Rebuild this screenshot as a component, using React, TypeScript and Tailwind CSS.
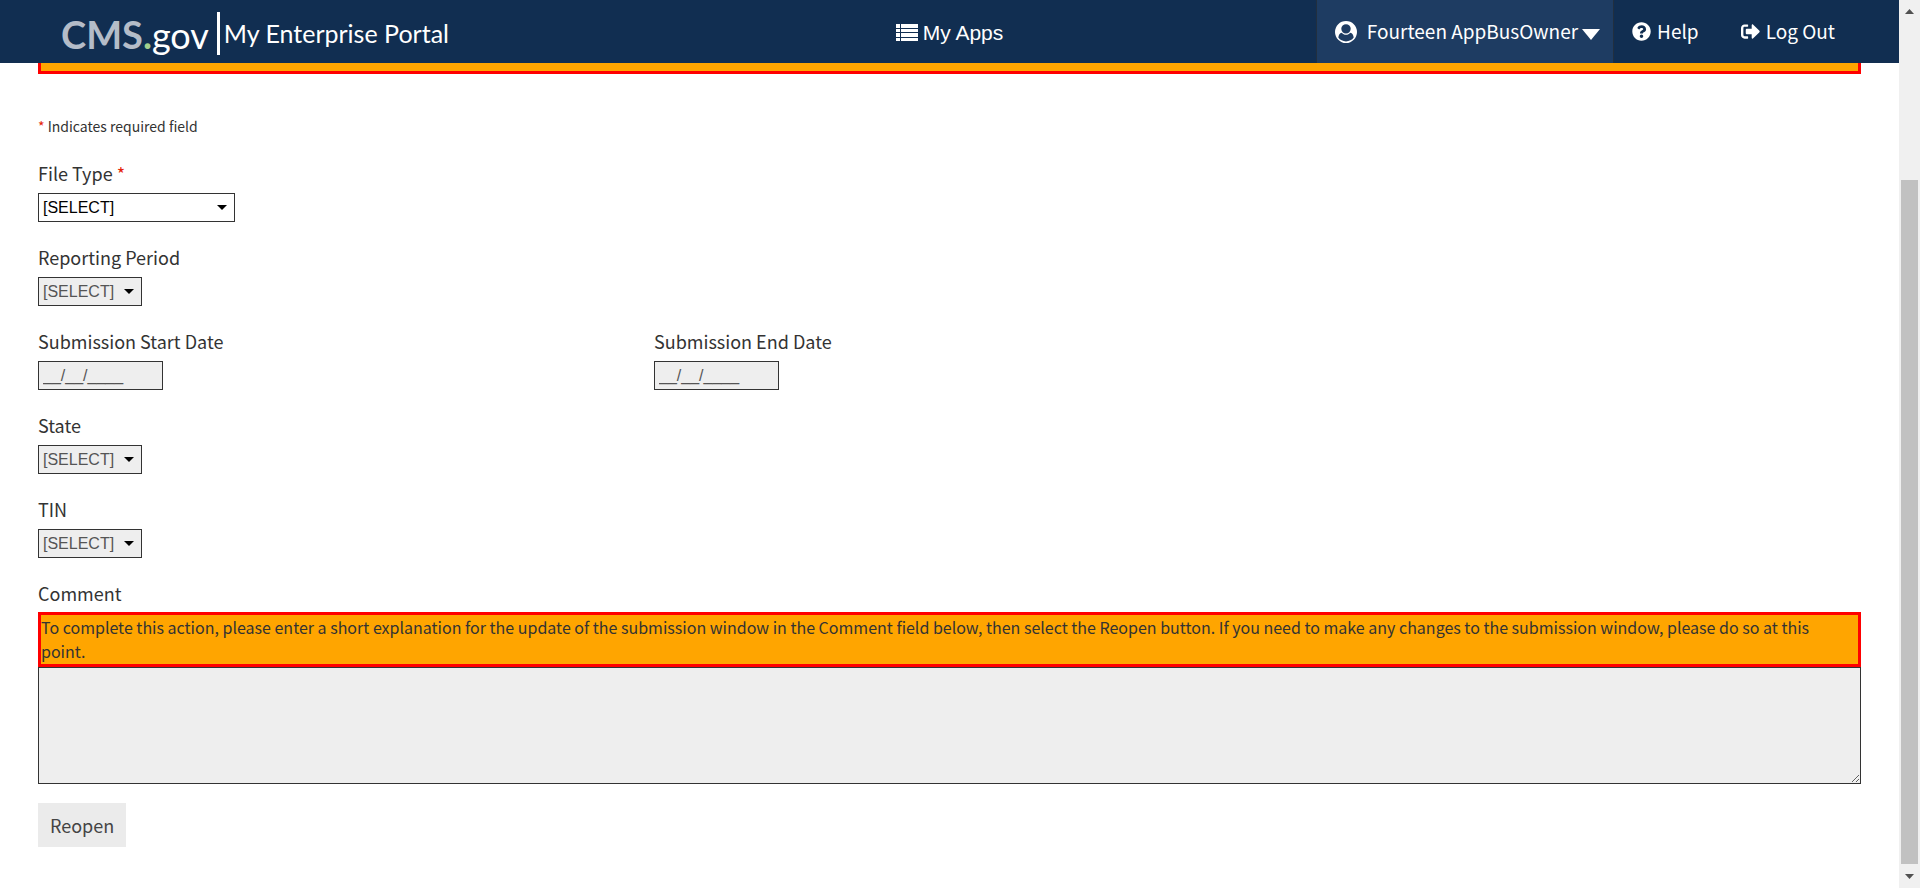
import React from "react";
import { FaQuestionCircle, FaSignOutAlt } from "react-icons/fa";

const body = "font-['Noto_Sans_CJK_SC','Noto_Sans',sans-serif]";
const arial = "font-['Liberation_Sans',Arial,sans-serif]";

type SelectProps = {
  id: string;
  label: string;
  required?: boolean;
  disabled?: boolean;
  width: string;
};

function Select({ id, label, required, disabled, width }: SelectProps) {
  return (
    <div className="flex flex-col items-start">
      <label htmlFor={id} className="mb-2 text-[18px] leading-6">
        {label} {required && <span className="text-[#e52207]">*</span>}
      </label>
      <div className={`relative ${width}`}>
        <select
          id={id}
          disabled={disabled}
          className={`block h-[29px] w-full appearance-none border border-[#333] pl-1 text-[16px] opacity-100 ${arial} ${disabled ? "bg-[#eee] text-[#555]" : "bg-white text-black"}`}
        >
          <option>[SELECT]</option>
        </select>
        <svg viewBox="0 0 10 5" className="pointer-events-none absolute right-2 top-3 h-[5px] w-[10px]">
          <path d="M0 0h10L5 5z" fill="#000" />
        </svg>
      </div>
    </div>
  );
}

function DateField({ id, label }: { id: string; label: string }) {
  return (
    <div className="flex flex-col items-start">
      <label htmlFor={id} className="mb-2 text-[18px] leading-6">{label}</label>
      <input
        id={id}
        disabled
        defaultValue="__/__/____"
        className={`block h-[29px] w-[125px] border border-[#333] bg-[#eee] pl-1 text-[16px] text-[#555] ${arial}`}
      />
    </div>
  );
}

function UserIcon() {
  return (
    <svg viewBox="0 0 1792 1792" className="size-[22px]" fill="currentColor">
      <path d="M1523 1339q-22-155-87.5-257.5t-184.5-118.5q-67 74-159.5 115.5t-195.5 41.5-195.5-41.5-159.5-115.5q-119 16-184.5 118.5t-87.5 257.5q106 150 271 237.5t356 87.5 356-87.5 271-237.5zm-243-699q0-159-112.5-271.5t-271.5-112.5-271.5 112.5-112.5 271.5 112.5 271.5 271.5 112.5 271.5-112.5 112.5-271.5zm512 256q0 182-71 347.5t-190.5 286-285.5 191.5-349 71q-182 0-348-71t-286-191-191-286-71-348 71-348 191-286 286-191 348-71 348 71 286 191 191 286 71 348z" />
    </svg>
  );
}

function Header() {
  return (
    <header className="fixed inset-x-0 top-0 z-10 mr-[21px] grid h-[63px] grid-cols-[1fr_auto_1fr] bg-[#112e51] text-[19px] text-white">
      <a href="#" className="flex items-center pl-[61px] font-['Lato',sans-serif]">
        <span className="flex items-baseline pt-1 text-[38px] leading-none">
          <span className="font-bold text-[#b4bcc8]">CMS</span>
          <span className="font-bold text-[#a3d08e]">.</span>
          <span className="text-[36px]">gov</span>
        </span>
        <span className="ml-2 mr-1 mt-1 h-[43px] w-[3px] bg-white" />
        <span className="pt-1 text-[25px] leading-none">My Enterprise Portal</span>
      </a>
      <a href="#" className={`flex items-center gap-[5px] pt-0.5 text-[21px] ${arial}`}>
        <svg viewBox="0 0 22 18" className="h-[18px] w-[22px]" fill="currentColor">
          <path d="M0 0h4v4H0zM5 0h17v4H5zM0 5h4v3H0zM5 5h17v3H5zM0 9h4v4H0zM5 9h17v4H5zM0 14h4v3H0zM5 14h17v3H5z" />
        </svg>
        My Apps
      </a>
      <nav className="flex items-stretch justify-end pr-16">
        <button className="flex items-center border-x border-[#212f3f] bg-[#1e3c62] pl-[18px] pr-[13px]">
          <UserIcon />
          <span className="ml-2.5 mr-1">Fourteen AppBusOwner</span>
          <svg viewBox="0 0 18 11" className="mt-1.5 h-[11px] w-[18px]">
            <path d="M0 0h18L9 11z" fill="currentColor" />
          </svg>
        </button>
        <a href="#" className="ml-[18px] flex items-center gap-1.5">
          <FaQuestionCircle className="size-[19px]" />
          Help
        </a>
        <a href="#" className="ml-[42px] flex items-center gap-1.5">
          <FaSignOutAlt className="size-[19px]" />
          Log Out
        </a>
      </nav>
    </header>
  );
}

function Scrollbar() {
  return (
    <div aria-hidden="true" className="fixed inset-y-0 right-0 z-20 flex w-[21px] flex-col items-center bg-[#f0f0f0] py-[9px]">
      <svg viewBox="0 0 9 5" className="h-[5px] w-[9px]"><path d="M0 5h9L4.500 0z" fill="#505050" /></svg>
      <div className="grow-[166]" />
      <div className="w-[17px] grow-[684] bg-[#c1c1c1]" />
      <div className="grow-[10]" />
      <svg viewBox="0 0 9 5" className="h-[5px] w-[9px]"><path d="M0 0h9L4.500 5z" fill="#505050" /></svg>
    </div>
  );
}

export default function App() {
  return (
    <div className={`min-h-screen bg-white pr-[21px] text-[#333] ${body}`}>
      <Header />
      <main className="px-[38px] pb-10">
        <div className="h-[74px] border-[3px] border-[#f00] bg-[#ffa500]" />
        <p className="mt-10 text-[14px] leading-6">
          <span className="text-[#e52207]">*</span> Indicates required field
        </p>
        <div className="mt-[23px] flex flex-col gap-[23px]">
          <Select id="type" label="File Type" required width="w-[197px]" />
          <Select id="period" label="Reporting Period" disabled width="w-[104px]" />
          <div className="grid grid-cols-[616px_1fr]">
            <DateField id="start" label="Submission Start Date" />
            <DateField id="end" label="Submission End Date" />
          </div>
          <Select id="state" label="State" disabled width="w-[104px]" />
          <Select id="tin" label="TIN" disabled width="w-[104px]" />
          <div>
            <label htmlFor="comment" className="mb-[7px] block text-[18px] leading-6">Comment</label>
            <div className="border-[3px] border-[#f00] bg-[#ffa500] pb-px pr-4 text-[16px] leading-6">
              To complete this action, please enter a short explanation for the update of the submission window in the Comment field below, then select the Reopen button. If you need to make any changes to the submission window, please do so at this point.
            </div>
            <textarea id="comment" disabled className="block h-[117px] w-full border border-[#333] bg-[#eee]" />
          </div>
        </div>
        <button disabled className="mt-[19px] h-11 bg-[#ebebeb] px-3 text-[18px] text-[#444]">Reopen</button>
      </main>
      <Scrollbar />
    </div>
  );
}
